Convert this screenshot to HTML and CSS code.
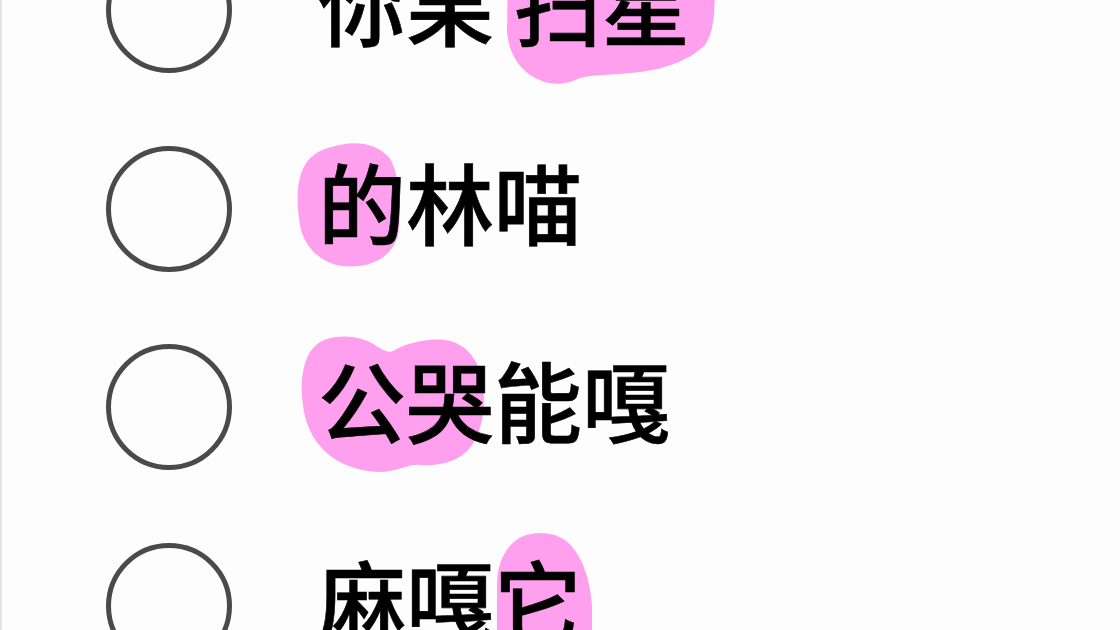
FILE: index.html
```html
<!DOCTYPE html>
<html lang="zh">
<head>
<meta charset="utf-8">
<title>选择</title>
<link rel="stylesheet" href="styles.css">
</head>
<body>
<div class="list">
  <div class="row">
    <svg class="blob" viewBox="0 -89 1120 198.5" preserveAspectRatio="none"><path d="M508 -30 L507 30 C508 55 522 75 545 82 C560 86 572 82 580 78 C595 74 615 75 640 72 C665 69 690 60 705 45 C714 32 716 10 714 -30 Z"/></svg>
    <span class="radio"></span>
    <span class="label">你果 扫星</span>
  </div>
  <div class="row">
    <svg class="blob" viewBox="0 109.5 1120 198.5" preserveAspectRatio="none"><path d="M330 147 C350 140 375 140 390 158 C400 175 402 210 398 235 C392 255 375 266 350 266 C325 266 305 250 300 225 C296 200 296 175 308 160 C315 152 322 149 330 147 Z"/></svg>
    <span class="radio"></span>
    <span class="label">的林喵</span>
  </div>
  <div class="row">
    <svg class="blob" viewBox="0 308 1120 198.5" preserveAspectRatio="none"><path d="M327 339 C345 334 362 337 375 345 C382 350 388 353 393 351 C405 344 425 338 445 340 C462 342 476 355 481 375 C487 400 484 430 470 448 C458 462 440 466 420 465 C410 464 405 468 395 470 C380 474 360 472 340 462 C318 450 306 430 303 405 C300 385 302 365 310 352 C315 345 320 341 327 339 Z"/></svg>
    <span class="radio"></span>
    <span class="label">公哭能嘎</span>
  </div>
  <div class="row">
    <svg class="blob" viewBox="0 506.5 1120 198.5" preserveAspectRatio="none"><path d="M520 537 C535 530 555 531 568 542 C583 556 590 580 592 605 L592 640 L497 640 L497 585 C497 565 503 548 520 537 Z"/></svg>
    <span class="radio"></span>
    <span class="label">麻嘎它</span>
  </div>
</div>
</body>
</html>
```

FILE: styles.css
```css
html, body {
  margin: 0;
  padding: 0;
}

body {
  width: 1120px;
  height: 630px;
  overflow: hidden;
  background: #fdfdfd;
  border-left: 2px solid #e2e5ee;
  box-sizing: border-box;
  font-family: "Noto Sans CJK SC", "Noto Sans", sans-serif;
}

.list {
  display: flex;
  flex-direction: column;
  margin-top: -89px;
}

.row {
  position: relative;
  display: flex;
  align-items: center;
  height: 198.5px;
  padding-left: 104px;
}

.blob {
  position: absolute;
  left: -2px;
  top: 0;
  width: 1120px;
  height: 198.5px;
  overflow: visible;
  fill: #ffa0ee;
  z-index: 0;
}

.radio {
  position: relative;
  z-index: 1;
  width: 126px;
  height: 126px;
  box-sizing: border-box;
  border: 5px solid #4a4a4a;
  border-radius: 50%;
  flex: none;
}

.label {
  position: relative;
  z-index: 1;
  margin-left: 86px;
  margin-bottom: 18px;
  font-size: 88px;
  line-height: 88px;
  font-weight: 500;
  -webkit-text-stroke: 0.6px #000;
  color: #000;
  white-space: pre;
}
```
